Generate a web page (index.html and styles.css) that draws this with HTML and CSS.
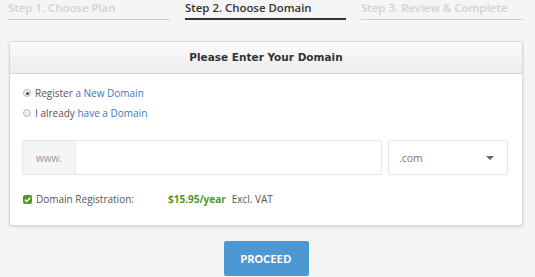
FILE: index.html
```html
<!DOCTYPE html>
<html>
<head>
<meta charset="utf-8">
<link rel="stylesheet" href="styles.css">
</head>
<body>
<div class="steps">
  <div class="step">Step 1. Choose Plan</div>
  <div class="step active">Step 2. Choose Domain</div>
  <div class="step">Step 3. Review &amp; Complete</div>
</div>
<div class="panel">
  <div class="panel-head">Please Enter Your Domain</div>
  <div class="panel-body">
    <div class="radios">
      <label class="radio-row"><span class="radio checked"></span>Register&nbsp;<a class="link">a New Domain</a></label>
      <label class="radio-row"><span class="radio"></span>I already&nbsp;<a class="link">have a Domain</a></label>
    </div>
    <div class="domain-row">
      <div class="input-group">
        <span class="addon">www.</span>
        <span class="field"></span>
      </div>
      <div class="select">
        <span>.com</span>
        <svg class="caret" width="8" height="4" viewBox="0 0 8 4"><path d="M0 0h8L4 4z" fill="#666"/></svg>
      </div>
    </div>
    <div class="reg-row">
      <span class="check"><svg width="9" height="9" viewBox="0 0 9 9"><path d="M2 4.6l1.8 1.8L7.2 2.8" stroke="#fff" stroke-width="1.5" fill="none"/></svg></span>
      <span class="reg-label">Domain Registration:</span>
      <span class="price">$15.95/year</span>
      <span class="vat">Excl. VAT</span>
    </div>
  </div>
</div>
<div class="actions">
  <button class="btn">PROCEED</button>
</div>
</body>
</html>
```
FILE: styles.css
```css
html, body {
  margin: 0;
  padding: 0;
}
body {
  background: #f5f5f5;
  font-family: "Open Sans", sans-serif;
  color: #555;
  width: 535px;
  height: 277px;
  overflow: hidden;
}
.steps {
  display: grid;
  grid-template-columns: 162px 161px 162px;
  column-gap: 15px;
  padding: 0 0 0 8px;
}
.step {
  font-size: 11.4px;
  font-weight: 600;
  color: #d2d2d2;
  height: 19px;
  line-height: 16px;
  border-bottom: 1px solid #cfcfcf;
}
.step.active {
  color: #333;
  height: 18px;
  border-bottom: 2px solid #333;
}
.panel {
  margin: 21px 12px 0 9px;
  background: #fff;
  border: 1px solid #d8d8d8;
  border-radius: 3px;
  box-shadow: 0 1px 3px rgba(0,0,0,0.12);
}
.panel-head {
  height: 31px;
  line-height: 31px;
  text-align: center;
  font-family: "DejaVu Sans", sans-serif;
  font-weight: 700;
  font-size: 10.5px;
  color: #333;
  background: linear-gradient(#fbfbfb, #ececec);
  border-bottom: 1px solid #d6d6d6;
  border-radius: 3px 3px 0 0;
}
.panel-body {
  padding: 11px 14px 19px 12px;
}
.radios {
  display: flex;
  flex-direction: column;
  gap: 4px;
}
.radio-row {
  display: flex;
  align-items: center;
  height: 16px;
  font-size: 10px;
  color: #555;
}
.radio {
  width: 8px;
  height: 8px;
  border-radius: 50%;
  border: 1px solid #bbb;
  background: #eee;
  margin-right: 4px;
  margin-left: 1px;
  box-sizing: border-box;
  position: relative;
}
.radio.checked::after {
  content: "";
  position: absolute;
  left: 1.5px;
  top: 1.5px;
  width: 3px;
  height: 3px;
  border-radius: 50%;
  background: #444;
}
.link {
  color: #3f77bb;
}
.domain-row {
  display: flex;
  gap: 6px;
  margin-top: 19px;
  height: 35px;
}
.input-group {
  flex: 1;
  display: flex;
  border: 1px solid #e6e6e6;
  border-radius: 2px;
}
.addon {
  width: 52px;
  background: #f5f5f5;
  border-right: 1px solid #e6e6e6;
  font-size: 10px;
  color: #999;
  display: flex;
  align-items: center;
  justify-content: center;
}
.field {
  flex: 1;
  background: #fff;
}
.select {
  width: 120px;
  box-sizing: border-box;
  border: 1px solid #e6e6e6;
  border-radius: 2px;
  display: flex;
  align-items: center;
  justify-content: space-between;
  padding: 0 13px 0 10px;
  font-size: 10.5px;
  color: #777;
}
.reg-row {
  display: flex;
  align-items: center;
  margin-top: 17px;
  height: 14px;
  font-size: 10px;
}
.check {
  width: 9px;
  height: 9px;
  background: #4c9a2a;
  border-radius: 2px;
  display: flex;
  margin-left: 1px;
  margin-right: 4px;
}
.reg-label {
  width: 132px;
  color: #555;
}
.price {
  color: #4c9a2a;
  font-weight: 700;
  margin-right: 6px;
}
.vat {
  color: #555;
}
.actions {
  display: flex;
  justify-content: center;
  margin-top: 15px;
}
.btn {
  width: 85px;
  height: 35px;
  border: 0;
  border-radius: 2px;
  background: #4b98d3;
  color: #fff;
  font-family: "Lato", sans-serif;
  font-weight: 900;
  font-size: 10.5px;
  letter-spacing: 0.3px;
  margin-left: -3px;
}
```
